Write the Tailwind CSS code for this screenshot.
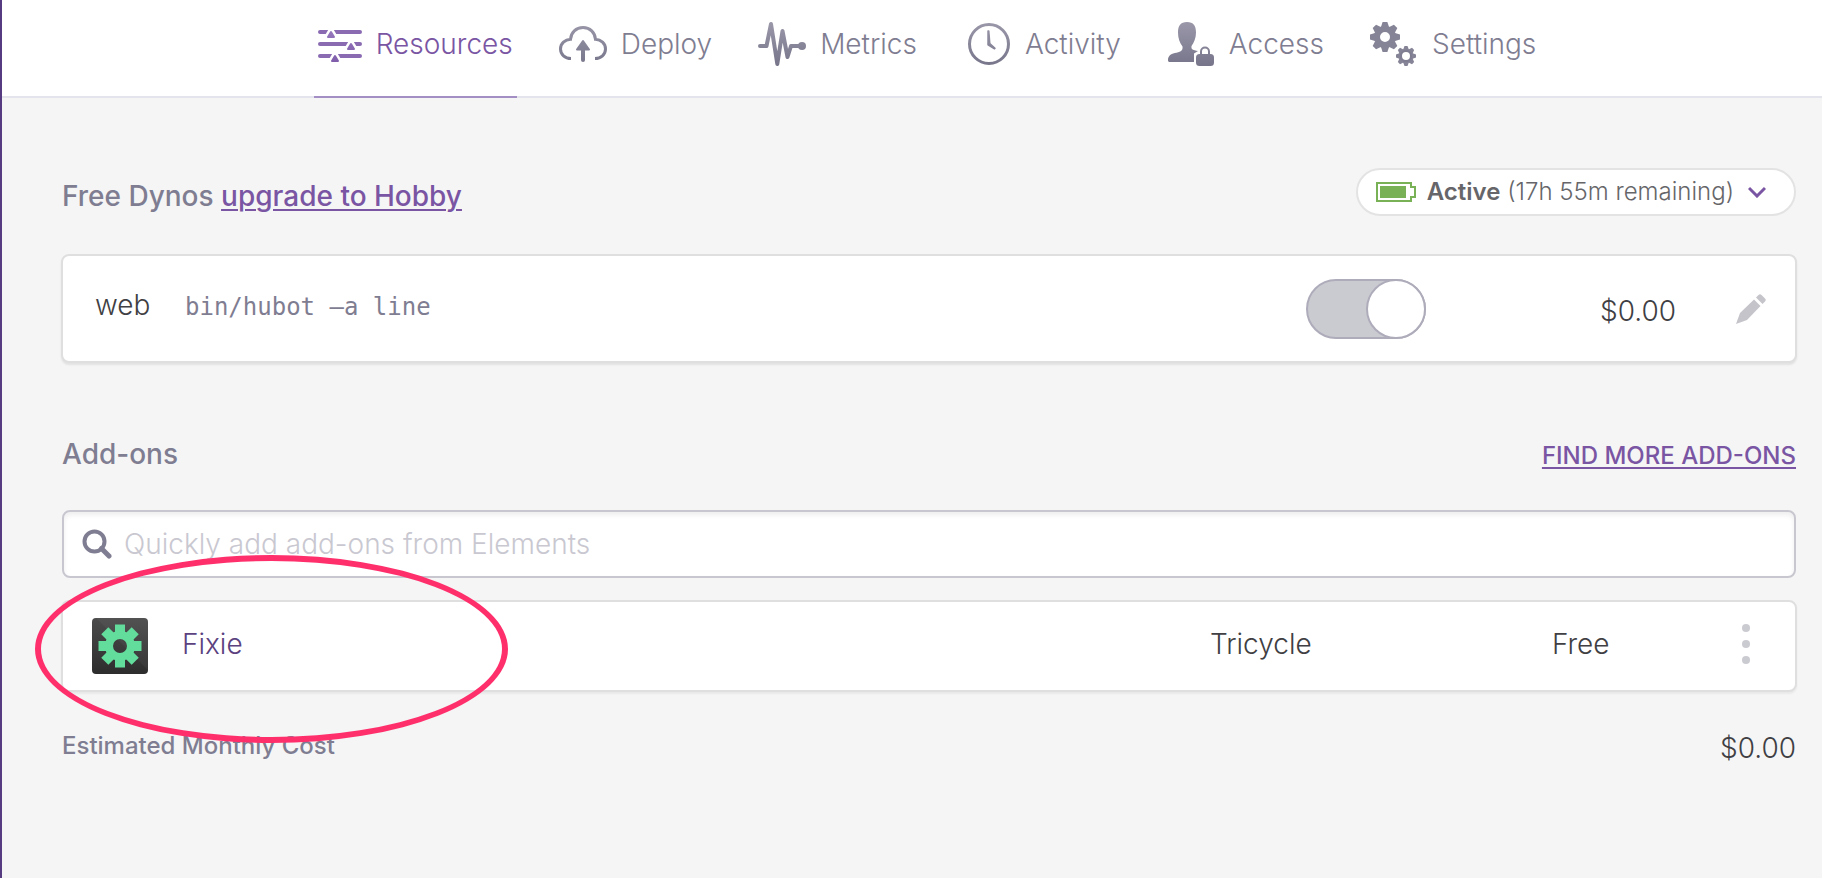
<!DOCTYPE html>
<html lang="en">

<head>
    <meta charset="UTF-8">
    <meta name="viewport" content="width=device-width, initial-scale=1.0">
    <title>Resources</title>
    <script src="https://cdn.jsdelivr.net/npm/@tailwindcss/browser@4"></script>
</head>

<body class="bg-[#f5f5f5] font-['Inter',sans-serif] font-light text-[28px] text-[#3f3f44]">
    <svg class="absolute size-0" aria-hidden="true">
        <defs>
            <linearGradient id="gray" gradientUnits="userSpaceOnUse" x1="0" y1="0" x2="0" y2="48">
                <stop offset="0" stop-color="#9b99aa" />
                <stop offset="1" stop-color="#757388" />
            </linearGradient>
            <linearGradient id="purple" gradientUnits="userSpaceOnUse" x1="0" y1="0" x2="0" y2="48">
                <stop offset="0" stop-color="#9d80c2" />
                <stop offset="1" stop-color="#7b58a7" />
            </linearGradient>
            <linearGradient id="dark" x1="0" y1="0" x2="0" y2="1">
                <stop offset="0" stop-color="#4b4b4b" />
                <stop offset="1" stop-color="#2d2d2d" />
            </linearGradient>
            <path id="bigTooth" d="M-4-10l1.600-5h4.800l1.600 5z" />
            <path id="smallTooth" d="M-3-6l1.500-4h3l1.500 4z" />
            <path id="fixieTooth" d="M-5-13v-8.500h10v8.500z" />
        </defs>
    </svg>

    <div class="min-h-screen border-l-2 border-[#563b80]">
        <nav class="h-[98px] bg-white border-b-2 border-[#e4e4ec] pl-[60px] pr-[30px] flex justify-center gap-[42px] text-[#7f7d91]">
            <a href="#" class="h-[98px] pb-2 pr-1 flex items-center gap-[14px] border-b-2 border-[#a38fc4] text-[#7a55a3]">
                <svg class="size-12" viewBox="0 0 48 48" fill="url(#purple)">
                    <path d="M6 12.010H46M6 24.010H46M6 36.010H46" stroke="#8a6bb2" stroke-width="4" stroke-linecap="round" />
                    <g stroke="#fff" stroke-width="7" stroke-linejoin="round">
                        <path d="M17 12l3 5h-6zM37 24l3 5h-6zM21 36l3 5h-6z" />
                    </g>
                    <g stroke="url(#purple)" stroke-width="2" stroke-linejoin="round">
                        <path d="M17 12l3 5h-6zM37 24l3 5h-6zM21 36l3 5h-6z" />
                    </g>
                </svg>
                Resources
            </a>
            <a href="#" class="h-[98px] pb-[10px] pr-1 flex items-center gap-[14px]">
                <svg class="size-12" viewBox="0 0 48 48" fill="none" stroke="url(#gray)">
                    <path d="M12 38.500C6 38.500 1.500 34.500 1.500 29S6 19.500 11.500 19.300C12 12.500 17 7.500 24 7.500S36 12.500 36.500 19.300C42 19.500 46.500 23.500 46.500 29S42 38.500 36 38.500" stroke-width="3" />
                    <path d="M24 27l.010 13" stroke-width="4" stroke-linecap="round" />
                    <path d="M24 21l6 8.500H18z" fill="url(#gray)" stroke-width="2" stroke-linejoin="round" />
                </svg>
                Deploy
            </a>
            <a href="#" class="h-[98px] pb-[10px] pr-1 flex items-center gap-[14px]">
                <svg class="size-12" viewBox="0 0 48 48" fill="none" stroke="url(#gray)" stroke-width="4" stroke-linecap="round" stroke-linejoin="round">
                    <path d="M2 26H8.500L13 4L19.300 44L24.500 11L29.500 37L33 26H43" />
                    <circle cx="44" cy="26" r="4" fill="url(#gray)" stroke="none" />
                </svg>
                Metrics
            </a>
            <a href="#" class="h-[98px] pb-[10px] pr-1 flex items-center gap-[14px]">
                <svg class="size-12" viewBox="0 0 48 48" fill="none" stroke="url(#gray)">
                    <circle cx="26" cy="24" r="19.500" stroke-width="3" />
                    <path d="M25 11h.800l1 12.500 5.200 4.700-.500.600-6.500-4z" fill="url(#gray)" stroke-width="1.500" stroke-linejoin="round" />
                </svg>
                Activity
            </a>
            <a href="#" class="h-[98px] pb-[10px] pr-1 flex items-center gap-[14px]">
                <svg class="size-12" viewBox="0 0 48 48" fill="url(#gray)">
                    <path d="M20 2c6.500 0 9 4 9 10.500 0 5.500-2 10-4.500 13.500-.500 3.500 1.500 4.200 6.500 5l-4 2.500V42H3c-1.500 0-2-.500-2-2 0-5 4-6.500 8.500-7.300 5-.900 6.500-3 6-6.200-2.800-3.500-4.500-8.500-4.500-14C11 6 13.500 2 20 2z" />
                    <rect x="29" y="34" width="18" height="12" rx="3.500" />
                    <path d="M34 35v-3.500a4 4 0 0 1 8 0V35" fill="none" stroke="url(#gray)" stroke-width="2" />
                </svg>
                Access
            </a>
            <a href="#" class="h-[98px] pb-[10px] pr-1 flex items-center gap-[14px]">
                <svg class="size-12" viewBox="0 0 48 48" fill="#858396">
                    <g transform="translate(15 17)">
                        <circle r="8" fill="none" stroke="#858396" stroke-width="6" />
                        <use href="#bigTooth" />
                        <use href="#bigTooth" transform="rotate(45)" />
                        <use href="#bigTooth" transform="rotate(90)" />
                        <use href="#bigTooth" transform="rotate(135)" />
                        <use href="#bigTooth" transform="rotate(180)" />
                        <use href="#bigTooth" transform="rotate(225)" />
                        <use href="#bigTooth" transform="rotate(270)" />
                        <use href="#bigTooth" transform="rotate(315)" />
                    </g>
                    <g transform="translate(36 36)">
                        <circle r="5.500" fill="none" stroke="#7f7d91" stroke-width="3" />
                        <use href="#smallTooth" />
                        <use href="#smallTooth" transform="rotate(45)" />
                        <use href="#smallTooth" transform="rotate(90)" />
                        <use href="#smallTooth" transform="rotate(135)" />
                        <use href="#smallTooth" transform="rotate(180)" />
                        <use href="#smallTooth" transform="rotate(225)" />
                        <use href="#smallTooth" transform="rotate(270)" />
                        <use href="#smallTooth" transform="rotate(315)" />
                    </g>
                </svg>
                Settings
            </a>
        </nav>

        <main class="pt-[70px] pb-10 pl-[60px] pr-[26px]">
            <!-- dynos -->
            <div class="flex justify-between items-end">
                <h2 class="leading-10 font-medium text-[#7f7d91]">Free Dynos <a href="#" class="text-[#7a55a3] underline decoration-2 underline-offset-3">upgrade to Hobby</a></h2>
                <button type="button" class="h-12 pl-[18px] pr-7 flex items-center bg-white border-2 border-[#e3e3e3] rounded-full text-2xl text-[#66666a]">
                    <svg class="w-10 h-5 mr-[11px]" viewBox="0 0 40 20">
                        <path d="M1 1H35V5H39V15H35V19H1z" fill="none" stroke="#79b256" stroke-width="2" />
                        <rect x="4" y="4" width="26" height="12" fill="#79b256" />
                    </svg>
                    <span><b class="font-semibold">Active</b> (17h 55m remaining)</span>
                    <svg class="w-[18px] h-3 ml-[14px]" viewBox="0 0 18 12" fill="none" stroke="#7a55a3" stroke-width="3">
                        <path d="M1 2l8 8 8-8" />
                    </svg>
                </button>
            </div>

            <div class="h-[109px] mt-[38px] -mx-px pl-8 pr-[29px] flex items-center bg-white border-2 border-[#dfdfdf] rounded-lg shadow-[0_2px_2px_rgba(0,0,0,0.08)]">
                <span class="w-[90px] pb-2">web</span>
                <code class="flex-1 pb-1 font-['DejaVu_Sans_Mono',monospace] font-normal text-2xl text-[#7f7d91]">bin/hubot –a line</code>
                <input type="checkbox" checked aria-label="web dyno" class="relative w-[120px] h-[60px] appearance-none rounded-full border-2 border-[#aeacba] bg-[#cacbd1] before:absolute before:-top-[2px] before:-right-[2px] before:size-[60px] before:rounded-full before:border-2 before:border-[#aeacba] before:bg-white">
                <span class="w-[250px] pt-1 text-right">$0.00</span>
                <button type="button" aria-label="Edit" class="ml-[60px]">
                    <svg class="size-[30px]" viewBox="0 0 30 30" fill="#c5c4ca">
                        <path d="M0 30L4 19L18 5.500L24.500 12L11 26z" />
                        <path d="M20 3.500L22.500 1Q24-.500 25.500 1L29 4.500Q30.500 6 29 7.500L26.500 10z" />
                    </svg>
                </button>
            </div>

            <!-- add-ons -->
            <div class="mt-[71px] flex justify-between items-baseline leading-10 font-medium">
                <h2 class="text-[#7f7d91]">Add-ons</h2>
                <a href="#" class="text-2xl leading-10 text-[#7a55a3] underline decoration-2 underline-offset-3">FIND MORE ADD-ONS</a>
            </div>

            <label class="h-[68px] mt-[34px] pl-[18px] flex items-center gap-3 bg-white border-2 border-[#c8c7d0] rounded-lg shadow-[inset_0_3px_5px_rgba(0,0,0,0.07)]">
                <svg class="size-[30px]" viewBox="0 0 30 30" fill="none" stroke="#7f7d91" stroke-width="4">
                    <circle cx="12.500" cy="12.500" r="10" />
                    <path d="M19.500 19.500L27 27" stroke-linecap="round" stroke-width="5" />
                </svg>
                <input type="text" placeholder="Quickly add add-ons from Elements" aria-label="Quickly add add-ons from Elements" class="flex-1 outline-none placeholder:text-[#c9c8d1]">
            </label>

            <div class="relative mt-[22px] -mx-px bg-white border-2 border-[#dfdfdf] rounded-lg shadow-[0_2px_2px_rgba(0,0,0,0.05)]">
                <table class="w-full">
                    <tr class="h-[88px]">
                        <td class="w-[119px] pl-[29px]">
                            <svg class="size-14" viewBox="0 0 56 56">
                                <rect width="56" height="56" rx="4" fill="url(#dark)" />
                                <path d="M4 0H52Q56 0 56 4V52z" fill="#fff" fill-opacity="0.040" />
                                <g transform="translate(28 28)" fill="#63dd9c">
                                    <circle r="11" fill="none" stroke="#63dd9c" stroke-width="8" />
                                    <use href="#fixieTooth" />
                                    <use href="#fixieTooth" transform="rotate(45)" />
                                    <use href="#fixieTooth" transform="rotate(90)" />
                                    <use href="#fixieTooth" transform="rotate(135)" />
                                    <use href="#fixieTooth" transform="rotate(180)" />
                                    <use href="#fixieTooth" transform="rotate(225)" />
                                    <use href="#fixieTooth" transform="rotate(270)" />
                                    <use href="#fixieTooth" transform="rotate(315)" />
                                </g>
                            </svg>
                        </td>
                        <td class="pb-1"><a href="#" class="text-[#5b427f]">Fixie</a></td>
                        <td class="w-[342px] pb-1">Tricycle</td>
                        <td class="w-[190px] pb-1">Free</td>
                        <td class="w-[53px] pb-1">
                            <button type="button" aria-label="Actions" class="flex flex-col gap-2">
                                <span class="size-2 rounded-full bg-[#cacad1]"></span>
                                <span class="size-2 rounded-full bg-[#cacad1]"></span>
                                <span class="size-2 rounded-full bg-[#cacad1]"></span>
                            </button>
                        </td>
                    </tr>
                </table>
                <!-- highlight around the add-on -->
                <div class="absolute -left-[28px] -top-[47px] w-[473px] h-[188px] border-6 border-[#ff2f6c] rounded-[50%] pointer-events-none"></div>
            </div>

            <div class="mt-9 flex justify-between leading-10">
                <span class="text-2xl leading-9 font-medium text-[#7f7d91]">Estimated Monthly Cost</span>
                <span>$0.00</span>
            </div>
        </main>
    </div>
</body>

</html>
